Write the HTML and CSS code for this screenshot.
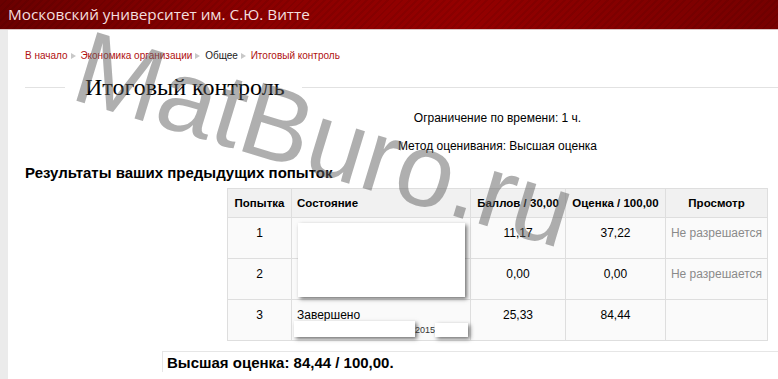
FILE: index.html
```html
<!DOCTYPE html>
<html lang="ru">
<head>
    <meta charset="UTF-8">
    <title>Итоговый контроль</title>
    <link rel="stylesheet" href="styles.css">
</head>
<body>
    <header class="site-header">
        <span class="site-name">Московский университет им. С.Ю. Витте</span>
    </header>

    <div class="page">
        <nav class="breadcrumb">
            <a href="#">В начало</a><span class="sep"></span>
            <a href="#">Экономика организации</a><span class="sep"></span>
            <span class="plain">Общее</span><span class="sep"></span>
            <a href="#">Итоговый контроль</a>
        </nav>

        <h2 class="quiz-title"><span>Итоговый контроль</span></h2>

        <div class="quiz-info">
            <p>Ограничение по времени: 1 ч.</p>
            <p>Метод оценивания: Высшая оценка</p>
        </div>

        <h3 class="results-title">Результаты ваших предыдущих попыток</h3>

        <div class="results">
            <table class="attempts">
                <thead>
                    <tr>
                        <th class="c-num">Попытка</th>
                        <th class="c-state">Состояние</th>
                        <th class="c-marks">Баллов / 30,00</th>
                        <th class="c-grade">Оценка / 100,00</th>
                        <th class="c-review">Просмотр</th>
                    </tr>
                </thead>
                <tbody>
                    <tr>
                        <td>1</td>
                        <td class="state"><div class="mask mask-big"></div></td>
                        <td>11,17</td>
                        <td>37,22</td>
                        <td class="muted">Не разрешается</td>
                    </tr>
                    <tr>
                        <td>2</td>
                        <td class="state"></td>
                        <td>0,00</td>
                        <td>0,00</td>
                        <td class="muted">Не разрешается</td>
                    </tr>
                    <tr>
                        <td>3</td>
                        <td class="state">
                            Завершено
                            <div class="stamp">
                                <span class="mask mask-date"></span><span class="year">2015</span><span class="mask mask-time"></span>
                            </div>
                        </td>
                        <td>25,33</td>
                        <td>84,44</td>
                        <td></td>
                    </tr>
                </tbody>
            </table>
        </div>

        <div class="best-grade">Высшая оценка: 84,44 / 100,00.</div>

        <div class="watermark">MatBuro.ru</div>
    </div>
</body>
</html>
```

FILE: styles.css
```css
body {
    margin: 0;
    font-family: "Liberation Sans", Arial, sans-serif;
    background-color: #ebebeb;
    color: #000;
    overflow: hidden;
}
.site-header {
    height: 30px;
    box-sizing: border-box;
    padding-left: 8px;
    border-bottom: 1px solid #d9c4c4;
    background:
        repeating-linear-gradient(-45deg, rgba(0, 0, 0, 0.07) 0, rgba(0, 0, 0, 0.07) 2px, transparent 2px, transparent 5px),
        linear-gradient(90deg, #6a0000 0%, #8a0000 30%, #940000 60%, #760000 100%);
}
.site-name {
    font-family: "Open Sans", sans-serif;
    font-size: 15.3px;
    line-height: 28px;
    color: #f3dede;
}
.page {
    position: relative;
    margin-left: 8px;
    min-height: 349px;
    padding: 19px 0 0 17px;
    background-color: #fff;
}
.breadcrumb {
    font-size: 10px;
    line-height: 13px;
    height: 13px;
}
.breadcrumb a {
    color: #b01010;
    text-decoration: none;
}
.breadcrumb .plain {
    color: #222;
}
.breadcrumb .sep {
    display: inline-block;
    width: 0;
    height: 0;
    margin: 0 2px 0 3px;
    border-top: 3px solid transparent;
    border-bottom: 3px solid transparent;
    border-left: 5px solid #c8c8c8;
}
.quiz-title {
    display: flex;
    align-items: center;
    margin: 12px 0 0 0;
    height: 26px;
    font-family: "Liberation Serif", serif;
    font-size: 24px;
    font-weight: normal;
}
.quiz-title::before,
.quiz-title::after {
    content: "";
    height: 1px;
    background-color: #e2e2e2;
}
.quiz-title::before {
    width: 40px;
    margin-right: 20px;
}
.quiz-title::after {
    flex: 1;
    margin-left: 17px;
}
.quiz-info {
    margin-left: 192px;
    text-align: center;
    font-size: 12px;
}
.quiz-info p {
    margin: 11px 0 0 0;
    line-height: 14px;
}
.quiz-info p + p {
    margin-top: 14px;
}
.results-title {
    margin: 11px 0 0 0;
    font-size: 15px;
    line-height: 18px;
}
.results {
    margin: 6px 0 0 192px;
    display: flex;
    justify-content: center;
}
.attempts {
    width: 541px;
    table-layout: fixed;
    border-collapse: collapse;
    font-size: 12px;
}
.attempts th,
.attempts td {
    box-sizing: border-box;
    border: 1px solid #dedede;
    text-align: center;
    vertical-align: top;
}
.attempts th {
    height: 29px;
    padding: 0 2px;
    vertical-align: middle;
    background-color: #f1f1f1;
    font-size: 11.5px;
}
.attempts td {
    height: 41px;
    padding: 8px 2px 0 2px;
    background-color: #fafafa;
}
.attempts .c-num { width: 64px; }
.attempts .c-state { width: 179px; text-align: left; padding-left: 5px; }
.attempts .c-marks { width: 95px; }
.attempts .c-grade { width: 100px; }
.attempts .state {
    position: relative;
    text-align: left;
    padding-left: 5px;
}
.attempts .muted {
    color: #8a8a8a;
}
.mask {
    background-color: #fff;
    box-shadow: 2px 2px 4px rgba(0, 0, 0, 0.55);
}
.mask-big {
    position: absolute;
    left: 6px;
    top: 5px;
    width: 167px;
    height: 74px;
    z-index: 2;
}
.stamp {
    display: flex;
    align-items: flex-start;
    margin: -1px 0 0 -3px;
}
.mask-date {
    width: 121px;
    height: 16px;
}
.year {
    font-size: 9px;
    line-height: 16px;
    color: #333;
    margin-top: 1px;
}
.mask-time {
    width: 33px;
    height: 14px;
    margin-top: 2px;
}
.best-grade {
    margin: 10px 0 0 137px;
    padding: 2px 0 0 4px;
    border-top: 1px solid #e6e6e6;
    border-left: 1px solid #e6e6e6;
    font-size: 15px;
    font-weight: bold;
    line-height: 18px;
}
.watermark {
    position: absolute;
    left: 86px;
    top: -16px;
    font-size: 104px;
    line-height: 1;
    color: rgba(95, 95, 95, 0.5);
    transform: rotate(17deg);
    transform-origin: left top;
    pointer-events: none;
    white-space: nowrap;
    z-index: 3;
}
```
